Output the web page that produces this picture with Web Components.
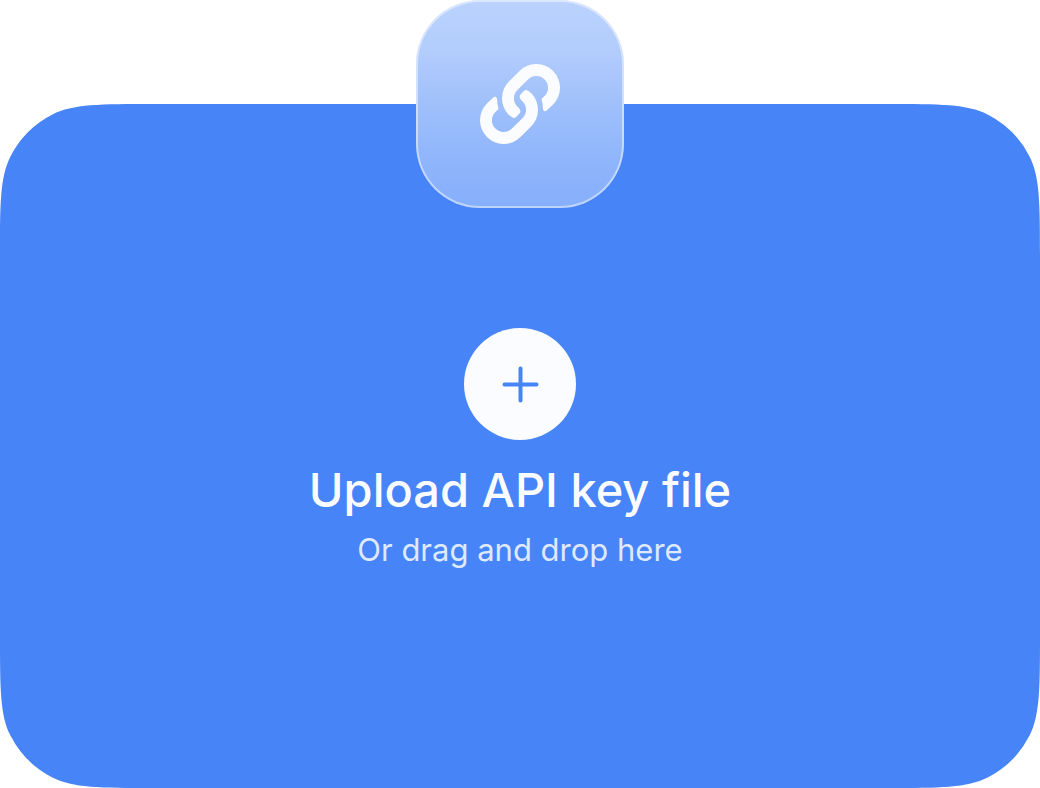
<!DOCTYPE html>
<html lang="en">
<head>
<meta charset="utf-8">
<title>Upload API key file</title>
<style>
  body { margin: 0; background: #fff; font-family: Inter, "Liberation Sans", sans-serif; }
</style>
</head>
<body>
<upload-panel>
  <link-badge slot="badge"></link-badge>
  <file-drop>
    <span slot="title">Upload API key file</span>
    <span slot="hint">Or drag and drop here</span>
  </file-drop>
</upload-panel>

<script>
class UploadPanel extends HTMLElement {
  constructor() {
    super();
    this.attachShadow({ mode: "open" }).innerHTML = `
      <style>
        :host { display: flex; flex-direction: column; align-items: center; min-height: 100vh; }
        .badge { margin-bottom: -104px; z-index: 1; }
        .card { position: relative; align-self: stretch; flex: 1; display: flex; align-items: center;
                justify-content: center; padding: 134px 32px 128px; box-sizing: border-box; }
        .surface { position: absolute; inset: 0; width: 100%; height: 100%; fill: #4684f7; }
        .wide { x: 0; y: 154px; width: 100%; height: calc(100% - 308px); }
        .tall { x: 154px; y: 0; width: calc(100% - 308px); height: 100%; }
        .content { position: relative; }
      </style>
      <div class="badge"><slot name="badge"></slot></div>
      <div class="card">
        <svg class="surface" aria-hidden="true">
          <defs>
            <path id="corner" d="M154 154V0H153.6C99.83 0 72.95 0 52.42 10.46A96 96 0 0 0 10.46 52.42C0 72.95 0 99.83 0 153.6V154Z"/>
          </defs>
          <rect class="wide"/>
          <rect class="tall"/>
          <use href="#corner"/>
          <svg x="100%" overflow="visible"><use href="#corner" transform="scale(-1 1)"/></svg>
          <svg y="100%" overflow="visible"><use href="#corner" transform="scale(1 -1)"/></svg>
          <svg x="100%" y="100%" overflow="visible"><use href="#corner" transform="scale(-1 -1)"/></svg>
        </svg>
        <div class="content"><slot></slot></div>
      </div>`;
  }
}

class LinkBadge extends HTMLElement {
  constructor() {
    super();
    this.attachShadow({ mode: "open" }).innerHTML = `
      <style>
        :host { display: flex; align-items: center; justify-content: center; width: 208px; height: 208px;
                box-sizing: border-box; border: 2px solid transparent; border-radius: 64px;
                background:
                  linear-gradient(#bad2fd, #b2ccfc 25%, #a0c0fb 50%, #90b6fb 75%, #86affb) padding-box,
                  linear-gradient(#dae7fd, #cfdffd 50%, #bcd3fc) border-box; }
        svg { width: 80px; height: 80px; fill: #fbfcff; }
      </style>
      <svg viewBox="0 0 80 80" aria-hidden="true">
        <defs>
          <path id="half" d="M67 46.3L73.06 40.46A23.7 23.7 0 1 0 39.54 6.94L28.94 17.54A23.7 23.7 0 0 0 28.6 50.7L32 53.3Q34.2 54.9 36.1 53.1L39.5 49.5Q41 47.6 39.9 45.6Q39.2 44.3 37.4 42.6A11.7 11.7 0 0 1 37.4 26L48 15.4A11.7 11.7 0 1 1 64.6 32L61.5 35Q62.8 39.5 62.9 44.5C63 47.4 65.2 47.9 67 46.3Z"/>
        </defs>
        <use href="#half"/>
        <use href="#half" transform="rotate(180 40 40)"/>
      </svg>`;
  }
}

class FileDrop extends HTMLElement {
  constructor() {
    super();
    const root = this.attachShadow({ mode: "open" });
    root.innerHTML = `
      <style>
        :host { display: flex; flex-direction: column; align-items: center; text-align: center; color: #fbfcff; }
        button { display: flex; align-items: center; justify-content: center; width: 112px; height: 112px;
                 margin: 0 0 22px; padding: 0; border: 0; border-radius: 50%; background: #fbfcff; cursor: pointer; }
        svg { width: 40px; height: 40px; fill: none; stroke: #4684f7; stroke-width: 4; stroke-linecap: round; }
        h1 { margin: 0 0 12px; font-size: 47px; line-height: 56px; font-weight: 500; }
        p { margin: 0; font-size: 31px; line-height: 40px; color: #dfe9fe; }
      </style>
      <button type="button" aria-labelledby="title">
        <svg viewBox="0 0 40 40" aria-hidden="true"><path d="M20.5 4.5V36.5M4.5 20.5H36.5"/></svg>
      </button>
      <input type="file" aria-labelledby="title" hidden>
      <h1 id="title"><slot name="title"></slot></h1>
      <p><slot name="hint"></slot></p>`;
    const input = root.querySelector("input");
    root.querySelector("button").addEventListener("click", () => input.click());
    this.addEventListener("dragover", (e) => e.preventDefault());
    this.addEventListener("drop", (e) => {
      e.preventDefault();
      input.files = e.dataTransfer.files;
    });
  }
}

customElements.define("upload-panel", UploadPanel);
customElements.define("link-badge", LinkBadge);
customElements.define("file-drop", FileDrop);
</script>
</body>
</html>
